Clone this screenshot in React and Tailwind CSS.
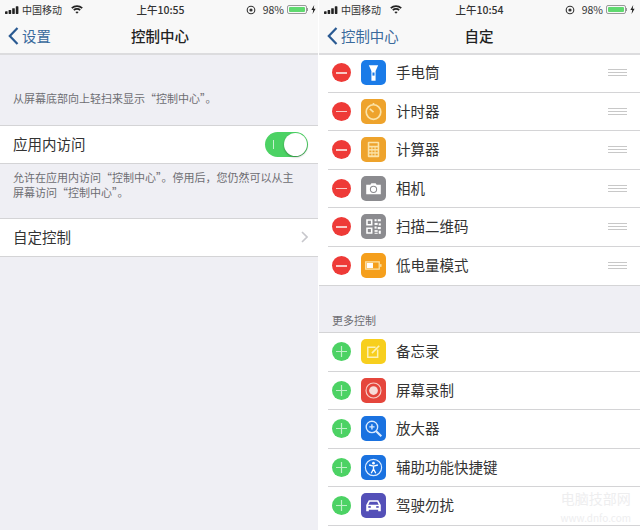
import React from 'react';

const CJK = "font-['Noto_Sans_CJK_SC','Noto_Sans',sans-serif]";

const StatusBar = ({ time }) => (
  <div className="flex h-[18px] w-[319px] items-center justify-between pl-[5px] pr-[3px] pt-[1px] text-[10.5px] text-[#333]">
    <div className="flex w-[100px] items-center text-[10px]">
      <svg width="14" height="8" viewBox="0 0 14 9" preserveAspectRatio="none" className="mr-[3px]">
        <rect x="0" y="6" width="2.6" height="3" rx="0.5" fill="#222" />
        <rect x="3.6" y="4.4" width="2.6" height="4.6" rx="0.5" fill="#222" />
        <rect x="7.2" y="2.4" width="2.6" height="6.6" rx="0.5" fill="#222" />
        <rect x="10.8" y="0.4" width="2.6" height="8.6" rx="0.5" fill="#222" />
      </svg>
      <span>中国移动</span>
      <svg width="12" height="9" viewBox="0 0 12 9" className="ml-[9px]" fill="none" stroke="#222" strokeWidth="1.8">
        <path d="M0.8 3.2C3.8 0.4 8.2 0.4 11.2 3.2" />
        <path d="M2.8 5.2C4.6 3.6 7.4 3.6 9.2 5.2" />
        <path d="M6 8.8L4.4 7.1C5.4 6.4 6.6 6.4 7.6 7.1Z" fill="#222" stroke="none" />
      </svg>
    </div>
    <span className="font-medium">{time}</span>
    <div className="flex w-[100px] items-center justify-end">
      <svg width="10" height="10" viewBox="0 0 10 10" className="mr-[7px]" fill="none" stroke="#333" strokeWidth="1.1">
        <circle cx="5" cy="5" r="3.8" />
        <circle cx="5" cy="5" r="1.6" fill="#333" stroke="none" />
      </svg>
      <span>98%</span>
      <div className="ml-[3px] flex items-center">
        <div className="h-[9px] w-[20px] rounded-[2px] border border-[#999] p-[1px]">
          <div className="h-full w-full rounded-[1px] bg-[#5fd96f]" />
        </div>
        <div className="h-[3px] w-[1px] bg-[#999]" />
      </div>
      <svg width="5" height="9" viewBox="0 0 5 9" className="ml-[3px]">
        <path d="M3.2 0L0.4 5H2.2L1.6 9L4.6 3.8H2.7Z" fill="#222" />
      </svg>
    </div>
  </div>
);

const NavBar = ({ back, title, time }) => (
  <div className="relative z-10 h-[55px] shrink-0 overflow-hidden border-b-2 border-[#dcdcde] bg-[#f8f8f8]">
    <StatusBar time={time} />
    <div className="relative flex h-[35px] w-[320px] items-center justify-center">
      <div className="absolute left-[8px] top-[7px] flex items-center text-[14.4px] text-[#3a6a9c]">
        <svg width="11" height="18" viewBox="0 0 11 18" className="mr-[3px]" fill="none" stroke="#2a5a92" strokeWidth="2.2">
          <path d="M9.5 1L1.8 9L9.5 17" />
        </svg>
        <span>{back}</span>
      </div>
      <span className="text-[14.5px] font-medium text-[#222]">{title}</span>
    </div>
  </div>
);

const Handle = () => (
  <div className="flex w-[19px] flex-col gap-[2px]">
    <div className="h-[1px] bg-[#c8c8c8]" />
    <div className="h-[1px] bg-[#c8c8c8]" />
    <div className="h-[1px] bg-[#c8c8c8]" />
  </div>
);

const icons = {
  torch: (
    <g fill="#fff">
      <path d="M7.5 5H16.5L14 10.5V20H10V10.5Z" />
      <rect x="11" y="12" width="2" height="3" fill="#1a7be8" />
    </g>
  ),
  timer: (
    <g fill="none" stroke="#fbe3a8" strokeWidth="1.6">
      <circle cx="12" cy="12.5" r="7" />
      <path d="M12 12.5L8.5 9.5" />
      <path d="M12 3.8V5.5" />
    </g>
  ),
  calc: (
    <g>
      <rect x="6.5" y="4.5" width="11" height="15" rx="1" fill="#fbe3a8" />
      <g fill="#eea32c">
        <rect x="8" y="6" width="8" height="2.4" />
        <rect x="8" y="10" width="2" height="1.6" />
        <rect x="11" y="10" width="2" height="1.6" />
        <rect x="14" y="10" width="2" height="1.6" />
        <rect x="8" y="13" width="2" height="1.6" />
        <rect x="11" y="13" width="2" height="1.6" />
        <rect x="14" y="13" width="2" height="1.6" />
        <rect x="8" y="16" width="2" height="1.6" />
        <rect x="11" y="16" width="2" height="1.6" />
        <rect x="14" y="16" width="2" height="1.6" />
      </g>
    </g>
  ),
  camera: (
    <g>
      <path d="M5 8.5H9L10 7H14L15 8.5H19V17.5H5Z" fill="#fff" />
      <circle cx="12" cy="12.8" r="3" fill="none" stroke="#8b8b8f" strokeWidth="1" />
    </g>
  ),
  qr: (
    <g fill="#fff">
      <path d="M5 5H11V11H5ZM6.5 6.5V9.5H9.5V6.5Z" fillRule="evenodd" />
      <path d="M5 13H11V19H5ZM6.5 14.5V17.5H9.5V14.5Z" fillRule="evenodd" />
      <rect x="13" y="5" width="2" height="2" />
      <rect x="16" y="5" width="3" height="2" />
      <rect x="13" y="8.5" width="3" height="2" />
      <rect x="17" y="9" width="2" height="2" />
      <rect x="13" y="12" width="2" height="2" />
      <rect x="16" y="12.5" width="3" height="2" />
      <rect x="13" y="15.5" width="3" height="1.6" />
      <rect x="17" y="16" width="2" height="3" />
      <rect x="13" y="18" width="3" height="1" />
    </g>
  ),
  battery: (
    <g>
      <path d="M4.5 8.5H17.5V15.5H4.5Z" fill="none" stroke="#fbe3a8" strokeWidth="1.2" />
      <rect x="5.5" y="9.5" width="6" height="5" fill="#fff" />
      <rect x="18.3" y="10.7" width="1.4" height="2.6" fill="#fbe3a8" />
    </g>
  ),
  notes: (
    <g fill="none" stroke="#fdf1b5" strokeWidth="1.4">
      <path d="M16 10V17.5H6.5V8H14" />
      <path d="M10.5 13.5L17.5 6.5" strokeWidth="1.6" />
    </g>
  ),
  record: (
    <g fill="none">
      <circle cx="12" cy="12" r="7.2" stroke="#f7cfc9" strokeWidth="1.1" />
      <circle cx="12" cy="12" r="4.2" fill="#f7dcd8" />
    </g>
  ),
  magnifier: (
    <g fill="none" stroke="#dcebff" strokeWidth="1.3">
      <circle cx="10.5" cy="10.5" r="5.5" />
      <path d="M14.6 14.6L19.5 19.5" strokeWidth="2" />
      <path d="M8 10.5H13M10.5 8V13" />
    </g>
  ),
  access: (
    <g>
      <circle cx="12" cy="12" r="7.8" fill="none" stroke="#dcebff" strokeWidth="1.1" />
      <circle cx="12" cy="7.8" r="1.3" fill="#fff" />
      <path d="M7.8 9.6L12 10.6L16.2 9.6M12 10.6V13.4M12 13.4L9.8 17.5M12 13.4L14.2 17.5" fill="none" stroke="#fff" strokeWidth="1.3" />
    </g>
  ),
  car: (
    <g fill="#fff">
      <path d="M7.5 7H16.5L19 11.5V17.5H16.5V16H7.5V17.5H5V11.5ZM8.4 8.5L7 11.3H17L15.6 8.5Z" fillRule="evenodd" />
      <rect x="7" y="12.6" width="2.4" height="1.6" fill="#5450b8" />
      <rect x="14.6" y="12.6" width="2.4" height="1.6" fill="#5450b8" />
    </g>
  ),
};

const addedRows = [
  { name: '手电筒', icon: 'torch', color: 'bg-[#1a7be8]' },
  { name: '计时器', icon: 'timer', color: 'bg-[#eea32c]' },
  { name: '计算器', icon: 'calc', color: 'bg-[#eea32c]' },
  { name: '相机', icon: 'camera', color: 'bg-[#8b8b8f]' },
  { name: '扫描二维码', icon: 'qr', color: 'bg-[#8b8b8f]' },
  { name: '低电量模式', icon: 'battery', color: 'bg-[#f59f1c]' },
];

const moreRows = [
  { name: '备忘录', icon: 'notes', color: 'bg-[#f7cf1e]' },
  { name: '屏幕录制', icon: 'record', color: 'bg-[#e5463c]' },
  { name: '放大器', icon: 'magnifier', color: 'bg-[#1a72e0]' },
  { name: '辅助功能快捷键', icon: 'access', color: 'bg-[#1a72e0]' },
  { name: '驾驶勿扰', icon: 'car', color: 'bg-[#5450b8]' },
];

const Row = ({ row, add, last }) => (
  <div className="h-[38.5px] bg-white pl-[9px]">
    <div className={`flex h-full items-center pl-[4px] pr-[13px] ${last ? '' : 'border-b border-[#d4d4d6]'}`}>
      {add ? (
        <div className="flex h-[19px] w-[19px] shrink-0 items-center justify-center rounded-full bg-[#4cd264]">
          <svg width="11" height="11" viewBox="0 0 11 11" stroke="#bff0c8" strokeWidth="1.2">
            <path d="M0 5.5H11M5.5 0V11" />
          </svg>
        </div>
      ) : (
        <div className="flex h-[19px] w-[19px] shrink-0 items-center justify-center rounded-full bg-[#ee3a37]">
          <div className="h-[1.5px] w-[11px] bg-[#f9c9c6]" />
        </div>
      )}
      <div className={`ml-[10px] mr-[10px] h-[25px] w-[25px] rounded-[5px] ${row.color}`}>
        <svg width="25" height="25" viewBox="0 0 24 24">{icons[row.icon]}</svg>
      </div>
      <span className="flex-1 pb-[1px] text-[14.5px] text-[#333]">{row.name}</span>
      {!add && <Handle />}
    </div>
  </div>
);

export default function App() {
  return (
    <div className={`flex h-[530px] w-[640px] overflow-hidden bg-white ${CJK}`}>
      {/* left: 控制中心 */}
      <div className="flex h-full w-[318px] flex-col bg-[#efeff4]">
        <NavBar back="设置" title="控制中心" time="上午10:55" />
        <p className="mt-[35px] pl-[13px] text-[11px] leading-[16px] text-[#6d6d72]">从屏幕底部向上轻扫来显示“控制中心”。</p>
        <div className="mt-[19px] flex h-[39px] items-center justify-between border-y border-[#d4d4d6] bg-white pb-[1px] pl-[13px] pr-[10px] text-[14.5px] text-[#333]">
          <span>应用内访问</span>
          <div className="relative h-[25px] w-[43px] rounded-full bg-[#4cd264]">
            <div className="absolute left-[8px] top-[8px] h-[9px] w-[1px] bg-[#c8f0d0]" />
            <div className="absolute right-[1px] top-[1px] h-[23px] w-[23px] rounded-full bg-white shadow-[0_1px_2px_rgba(0,0,0,0.35)]" />
          </div>
        </div>
        <p className="mt-[6px] pl-[13px] pr-[18px] text-[11px] leading-[14.5px] text-[#6d6d72]">
          {'允许在应用内访问“控制中心”。停用后\uFF0C您仍然可以从主屏幕访问“控制中心”。'}
        </p>
        <div className="mt-[19px] flex h-[39px] items-center justify-between border-y border-[#d4d4d6] bg-white pb-[2px] pl-[13px] pr-[10px] text-[14.5px] text-[#333]">
          <span>自定控制</span>
          <svg width="7" height="12" viewBox="0 0 7 12" fill="none" stroke="#c7c7cc" strokeWidth="1.6">
            <path d="M1 1L6 6L1 11" />
          </svg>
        </div>
      </div>

      {/* right: 自定 */}
      <div className="relative ml-[1px] flex h-full flex-1 flex-col bg-[#efeff4]">
        <NavBar back="控制中心" title="自定" time="上午10:54" />
        <div className="-mt-[1px] shrink-0 border-b border-[#d4d4d6]">
          {addedRows.map((row, i) => (
            <Row key={row.name} row={row} last={i === addedRows.length - 1} />
          ))}
        </div>
        <div className="flex h-[46px] shrink-0 items-end pb-[4px] pl-[13px] text-[11px] leading-[16px] text-[#6d6d72]">更多控制</div>
        <div className="shrink-0 border-t border-[#d4d4d6]">
          {moreRows.map(row => (
            <Row key={row.name} row={row} add />
          ))}
          <div className="h-[6px] bg-white" />
        </div>
        <div className="absolute bottom-[6px] right-[9px] flex flex-col items-center text-[#eeeeef]">
          <span className="text-[14px] leading-[16px]">电脑技部网</span>
          <span className="mt-[6px] text-[10px] leading-[12px]">www.dnfo.com</span>
        </div>
      </div>
    </div>
  );
}
